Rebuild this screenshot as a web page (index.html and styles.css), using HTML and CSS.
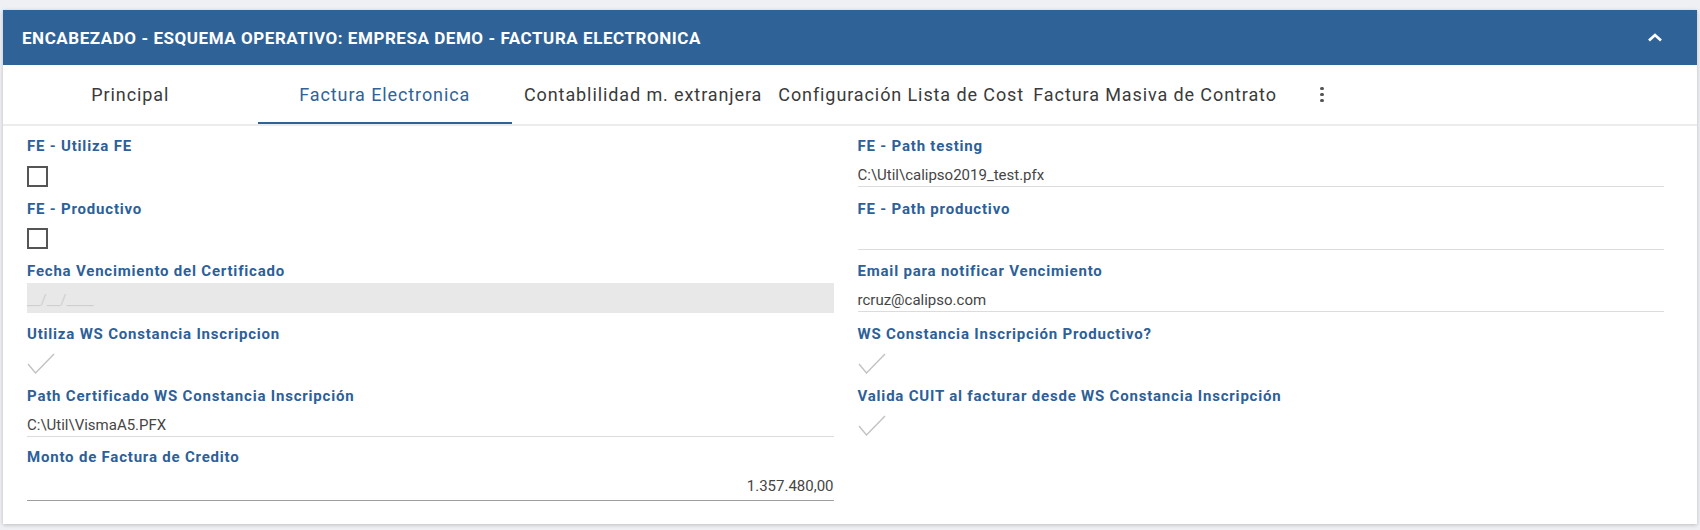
FILE: index.html
```html
<!DOCTYPE html>
<html lang="es">
<head>
<meta charset="utf-8">
<title>Encabezado - Esquema Operativo</title>
<link rel="stylesheet" href="styles.css">
</head>
<body>
<div class="card">
  <div class="card-header">
    <span class="card-title">ENCABEZADO - ESQUEMA OPERATIVO: EMPRESA DEMO - FACTURA ELECTRONICA</span>
    <svg class="chevron" width="16" height="10" viewBox="0 0 16 10"><polyline points="2,8.5 8,3 14,8.5" fill="none" stroke="#fff" stroke-width="2.6"/></svg>
  </div>
  <div class="tabs">
    <div class="tab tab-fixed">Principal</div>
    <div class="tab tab-fixed active">Factura Electronica</div>
    <div class="tab tab-auto">Contablilidad m. extranjera</div>
    <div class="tab tab-clip"><span class="clip">Configuración Lista de Costos</span></div>
    <div class="tab tab-last">Factura Masiva de Contrato</div>
    <div class="kebab"><span></span><span></span><span></span></div>
  </div>
  <div class="form">
    <div class="field">
      <div class="label">FE - Utiliza FE</div>
      <div class="checkbox"></div>
    </div>
    <div class="field">
      <div class="label">FE - Path testing</div>
      <div class="input">C:\Util\calipso2019_test.pfx</div>
    </div>
    <div class="field">
      <div class="label">FE - Productivo</div>
      <div class="checkbox"></div>
    </div>
    <div class="field">
      <div class="label">FE - Path productivo</div>
      <div class="input"></div>
    </div>
    <div class="field">
      <div class="label">Fecha Vencimiento del Certificado</div>
      <div class="date">__/__/____</div>
    </div>
    <div class="field">
      <div class="label">Email para notificar Vencimiento</div>
      <div class="input">rcruz@calipso.com</div>
    </div>
    <div class="field">
      <div class="label">Utiliza WS Constancia Inscripcion</div>
      <svg class="check" width="30" height="21" viewBox="0 0 30 21"><polyline points="1,11 8.5,20 27,1" fill="none" stroke="#c2c2c2" stroke-width="1.4"/></svg>
    </div>
    <div class="field">
      <div class="label">WS Constancia Inscripción Productivo?</div>
      <svg class="check" width="30" height="21" viewBox="0 0 30 21"><polyline points="1,11 8.5,20 27,1" fill="none" stroke="#c2c2c2" stroke-width="1.4"/></svg>
    </div>
    <div class="field">
      <div class="label">Path Certificado WS Constancia Inscripción</div>
      <div class="input">C:\Util\VismaA5.PFX</div>
    </div>
    <div class="field">
      <div class="label">Valida CUIT al facturar desde WS Constancia Inscripción</div>
      <svg class="check" width="30" height="21" viewBox="0 0 30 21"><polyline points="1,11 8.5,20 27,1" fill="none" stroke="#c2c2c2" stroke-width="1.4"/></svg>
    </div>
    <div class="field field-last">
      <div class="label">Monto de Factura de Credito</div>
      <div class="number">1.357.480,00</div>
    </div>
    <div class="field"></div>
  </div>
</div>
</body>
</html>
```
FILE: styles.css
```css
html, body {
  margin: 0;
  padding: 0;
}
body {
  background: #eef0f4;
  font-family: Roboto, "Liberation Sans", Arial, sans-serif;
  padding: 10px 3px 0 3px;
  height: 530px;
  box-sizing: border-box;
  overflow: hidden;
}
.card {
  background: #fff;
  box-shadow: 0 1px 4px rgba(0,0,0,0.22);
  height: 514px;
}
.card-header {
  height: 55px;
  background: #2f6398;
  display: flex;
  align-items: center;
  justify-content: space-between;
  padding: 0 34px 0 19px;
}
.card-title {
  color: #fff;
  font-weight: 700;
  font-size: 17px;
  letter-spacing: 0.55px;
}
.chevron {
  display: block;
  margin-top: -2px;
}
.tabs {
  display: flex;
  align-items: stretch;
  height: 59px;
  border-bottom: 2px solid #ececec;
}
.tab {
  display: flex;
  align-items: center;
  font-size: 18px;
  letter-spacing: 0.9px;
  color: #3a3a3a;
  white-space: nowrap;
  box-sizing: border-box;
}
.tab-fixed {
  width: 254.5px;
  justify-content: center;
}
.tab.active {
  color: #2f6398;
  box-shadow: inset 0 -2px 0 #2f6398;
}
.tab-auto {
  padding: 0 9px 0 12px;
}
.tab-clip {
  padding-left: 7px;
}
.clip {
  display: block;
  width: 246px;
  overflow: hidden;
}
.tab-last {
  padding: 0 25px 0 9px;
}
.kebab {
  display: flex;
  flex-direction: column;
  justify-content: center;
  align-items: center;
  gap: 2.5px;
  width: 40px;
}
.kebab span {
  width: 3.5px;
  height: 3.5px;
  border-radius: 50%;
  background: #555;
}
.form {
  display: grid;
  grid-template-columns: 1fr 1fr;
  grid-auto-rows: 62.5px;
  column-gap: 24px;
  padding: 10px 33px 0 24px;
}
.field {
  display: flex;
  flex-direction: column;
  align-items: flex-start;
}
.field-last {
  margin-top: -2px;
}
.label {
  font-size: 15px;
  line-height: 20px;
  font-weight: 700;
  letter-spacing: 0.8px;
  color: #2d5f99;
  white-space: nowrap;
}
.input {
  align-self: stretch;
  margin-top: 9px;
  height: 22px;
  line-height: 20px;
  font-size: 15px;
  color: #454545;
  border-bottom: 1px solid #dcdcdc;
  box-sizing: border-box;
}
.number {
  align-self: stretch;
  margin-top: 9px;
  height: 25px;
  line-height: 20px;
  font-size: 15px;
  color: #454545;
  text-align: right;
  border-bottom: 1px solid #9e9e9e;
  box-sizing: border-box;
}
.date {
  align-self: stretch;
  margin-top: 2px;
  height: 30px;
  padding-top: 4px;
  line-height: 26px;
  font-size: 15px;
  color: #cfcfcf;
  background: #e8e8e8;
  box-sizing: border-box;
}
.checkbox {
  margin-top: 9.5px;
  width: 21px;
  height: 21px;
  border: 2px solid #555;
  box-sizing: border-box;
}
.check {
  display: block;
  margin-top: 9px;
}
```
